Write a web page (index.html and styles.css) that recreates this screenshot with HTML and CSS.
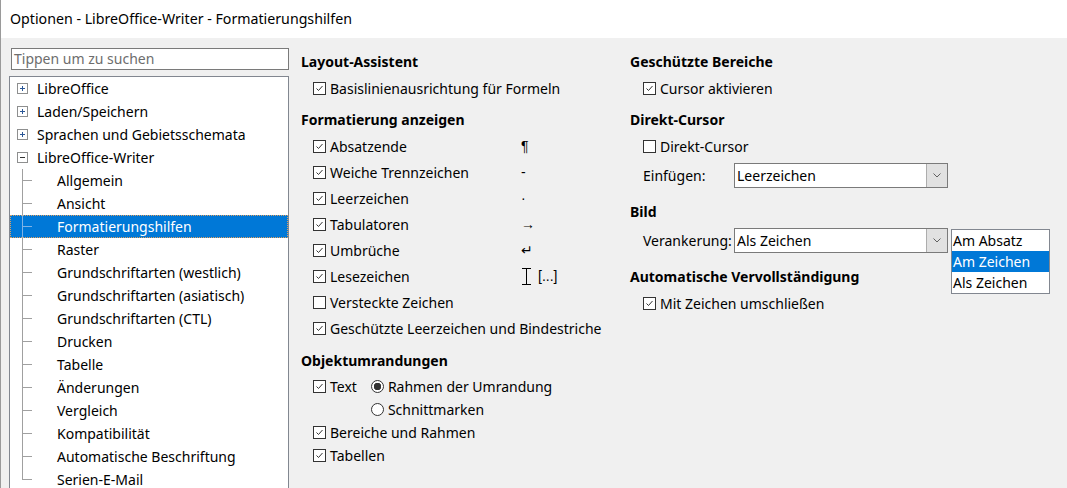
FILE: index.html
```html
<!DOCTYPE html>
<html lang="de">
<head>
    <meta charset="UTF-8">
    <meta name="viewport" content="width=device-width, initial-scale=1.0">
    <title>Optionen - LibreOffice-Writer - Formatierungshilfen</title>
    <link rel="stylesheet" href="styles.css">
</head>
<body>
<div class="window">
    <div class="titlebar">Optionen - LibreOffice-Writer - Formatierungshilfen</div>
    <div class="dialog">
        <!-- Navigation tree -->
        <aside class="sidebar">
            <div class="search">Tippen um zu suchen</div>
            <ul class="tree">
                <li class="node"><svg class="expander" viewBox="0 0 11 11"><rect x="0.5" y="0.5" width="10" height="10" fill="#fff" stroke="#8e8f8f"/><path d="M3 5.5h5M5.5 3v5" stroke="#2b5797"/></svg>LibreOffice</li>
                <li class="node"><svg class="expander" viewBox="0 0 11 11"><rect x="0.5" y="0.5" width="10" height="10" fill="#fff" stroke="#8e8f8f"/><path d="M3 5.5h5M5.5 3v5" stroke="#2b5797"/></svg>Laden/Speichern</li>
                <li class="node"><svg class="expander" viewBox="0 0 11 11"><rect x="0.5" y="0.5" width="10" height="10" fill="#fff" stroke="#8e8f8f"/><path d="M3 5.5h5M5.5 3v5" stroke="#2b5797"/></svg>Sprachen und Gebietsschemata</li>
                <li class="node open"><svg class="expander" viewBox="0 0 11 11"><rect x="0.5" y="0.5" width="10" height="10" fill="#fff" stroke="#8e8f8f"/><path d="M3 5.5h5" stroke="#333"/></svg>LibreOffice-Writer</li>
                <li class="leaf"><span class="twig"></span>Allgemein</li>
                <li class="leaf"><span class="twig"></span>Ansicht</li>
                <li class="leaf selected"><span class="twig"></span>Formatierungshilfen</li>
                <li class="leaf"><span class="twig"></span>Raster</li>
                <li class="leaf"><span class="twig"></span>Grundschriftarten (westlich)</li>
                <li class="leaf"><span class="twig"></span>Grundschriftarten (asiatisch)</li>
                <li class="leaf"><span class="twig"></span>Grundschriftarten (CTL)</li>
                <li class="leaf"><span class="twig"></span>Drucken</li>
                <li class="leaf"><span class="twig"></span>Tabelle</li>
                <li class="leaf"><span class="twig"></span>Änderungen</li>
                <li class="leaf"><span class="twig"></span>Vergleich</li>
                <li class="leaf"><span class="twig"></span>Kompatibilität</li>
                <li class="leaf"><span class="twig"></span>Automatische Beschriftung</li>
                <li class="leaf"><span class="twig"></span>Serien-E-Mail</li>
            </ul>
        </aside>

        <main class="page">
            <div class="column left">
                <section class="group">
                    <h2>Layout-Assistent</h2>
                    <div class="check on">Basislinienausrichtung für Formeln</div>
                </section>

                <section class="group">
                    <h2>Formatierung anzeigen</h2>
                    <div class="marks">
                        <div class="check on">Absatzende</div><span class="sym">¶</span>
                        <div class="check on">Weiche Trennzeichen</div><span class="sym">-</span>
                        <div class="check on">Leerzeichen</div><span class="sym">·</span>
                        <div class="check on">Tabulatoren</div><span class="sym">→</span>
                        <div class="check on">Umbrüche</div><span class="sym">↵</span>
                        <div class="check on">Lesezeichen</div><span class="sym"><svg class="ibeam" viewBox="0 0 11 17"><path d="M1 0.5h9M5.5 0.5v16M1 16.5h9" stroke="#000"/></svg> [...]</span>
                        <div class="check">Versteckte Zeichen</div><span class="sym"></span>
                        <div class="check on wide">Geschützte Leerzeichen und Bindestriche</div>
                    </div>
                </section>

                <section class="group outlines">
                    <h2>Objektumrandungen</h2>
                    <div class="outline">
                        <div class="check on">Text</div>
                        <div class="radios">
                            <div class="radio on">Rahmen der Umrandung</div>
                            <div class="radio">Schnittmarken</div>
                        </div>
                    </div>
                    <div class="check on tight">Bereiche und Rahmen</div>
                    <div class="check on tight">Tabellen</div>
                </section>
            </div>

            <div class="column right">
                <section class="group">
                    <h2>Geschützte Bereiche</h2>
                    <div class="check on">Cursor aktivieren</div>
                </section>

                <section class="group">
                    <h2>Direkt-Cursor</h2>
                    <div class="check">Direkt-Cursor</div>
                    <div class="field">
                        <span class="field-label">Einfügen:</span>
                        <div class="combo"><span class="combo-value">Leerzeichen</span><span class="combo-button"><svg viewBox="0 0 8 5"><path d="M0.5 0.5l3.5 3.5l3.5-3.5" fill="none" stroke="#606060"/></svg></span></div>
                    </div>
                </section>

                <section class="group image">
                    <h2>Bild</h2>
                    <div class="field">
                        <span class="field-label">Verankerung:</span>
                        <div class="combo"><span class="combo-value">Als Zeichen</span><span class="combo-button"><svg viewBox="0 0 8 5"><path d="M0.5 0.5l3.5 3.5l3.5-3.5" fill="none" stroke="#606060"/></svg></span>
                            <ul class="popup">
                                <li>Am Absatz</li>
                                <li class="selected">Am Zeichen</li>
                                <li>Als Zeichen</li>
                            </ul>
                        </div>
                    </div>
                </section>

                <section class="group completion">
                    <h2>Automatische Vervollständigung</h2>
                    <div class="check on">Mit Zeichen umschließen</div>
                </section>
            </div>
        </main>
    </div>
</div>
</body>
</html>
```

FILE: styles.css
```css
body {
    margin: 0;
    padding: 0;
    font-family: "Noto Sans", "Open Sans", sans-serif;
    font-size: 14px;
    color: #000;
    background-color: #f0f0f0;
    overflow: hidden;
}
.window {
    height: 488px;
    border-left: 1px solid #9a9a9a;
    box-sizing: border-box;
}
.titlebar {
    height: 38px;
    line-height: 38px;
    padding-left: 9px;
    background-color: #fff;
    font-size: 14.2px;
}
.dialog {
    display: flex;
    gap: 12px;
}

/* Sidebar */
.sidebar {
    width: 280px;
    padding-left: 8px;
    padding-top: 10px;
    flex-shrink: 0;
}
.search {
    height: 20px;
    line-height: 20px;
    margin-left: 2px;
    padding-left: 2px;
    border: 1px solid #7a7a7a;
    background-color: #fff;
    color: #6d6d6d;
}
.tree {
    list-style: none;
    margin: 6px 0 0 0;
    padding: 0;
    height: 420px;
    border: 1px solid #828790;
    background-color: #fff;
}
.tree li {
    display: flex;
    align-items: center;
    height: 23px;
    white-space: nowrap;
}
.expander {
    width: 11px;
    height: 11px;
    margin: 0 9px 0 7px;
}
.twig {
    align-self: stretch;
    width: 9px;
    margin: 0 25px 0 12px;
    border-left: 1px solid #a0a0a0;
    background: linear-gradient(#a0a0a0, #a0a0a0) no-repeat 0 11px / 9px 1px;
}
.tree li:last-child .twig {
    align-self: flex-start;
    height: 12px;
}
.tree .selected {
    background-color: #0078d7;
    color: #fff;
    outline: 1px dotted #e0a060;
    outline-offset: -1px;
}
.tree .selected .twig {
    border-left-color: #7fb3e6;
    background-image: linear-gradient(#7fb3e6, #7fb3e6);
}

/* Page content */
.page {
    display: flex;
    padding-top: 11px;
}
.column.left {
    width: 329px;
}
.column.right {
    width: 430px;
}
.group {
    margin-bottom: 6px;
}
.group h2 {
    margin: 0;
    font-size: 14px;
    font-weight: 700;
    line-height: 26px;
}
.check,
.radio {
    display: flex;
    align-items: center;
    height: 26px;
    margin-left: 12px;
    white-space: nowrap;
}
.right .check {
    margin-left: 13px;
}
.check::before {
    content: "";
    width: 13px;
    height: 13px;
    margin-right: 4px;
    flex-shrink: 0;
    box-sizing: border-box;
    border: 1px solid #333;
    background-color: #fff;
}
.check.on::before {
    background: #fff url("data:image/svg+xml,%3Csvg xmlns='http://www.w3.org/2000/svg' viewBox='0 0 11 11'%3E%3Cpath d='M2.5 5.5l2 2l4-4.5' fill='none' stroke='%23333'/%3E%3C/svg%3E") no-repeat center / 11px 11px;
}
.marks {
    display: grid;
    grid-template-columns: 220px auto;
}
.marks .wide {
    grid-column: 1 / 3;
}
.sym {
    display: flex;
    align-items: center;
    gap: 6px;
    height: 26px;
    font-family: "Liberation Sans", "DejaVu Sans", sans-serif;
    font-size: 14px;
}
.ibeam {
    width: 11px;
    height: 17px;
}
.outlines {
    margin-top: 7px;
}
.outline {
    display: flex;
    margin-top: 1px;
}
.outline .check {
    height: 23px;
}
.radios {
    margin-left: 14px;
}
.radio {
    height: 23px;
    margin-left: 0;
}
.radio::before {
    content: "";
    width: 13px;
    height: 13px;
    margin-right: 4px;
    border-radius: 50%;
    box-sizing: border-box;
    border: 1px solid #333;
    background-color: #fff;
}
.radio.on::before {
    background: radial-gradient(circle, #333 0, #333 3.5px, #fff 4px);
}
.check.tight {
    height: 23px;
}
.field {
    display: flex;
    align-items: center;
    margin: 4px 0 0 13px;
}
.field-label {
    width: 91px;
}
.combo {
    position: relative;
    display: flex;
    width: 214px;
    height: 25px;
    box-sizing: border-box;
    border: 1px solid #7a7a7a;
    background-color: #fff;
}
.combo-value {
    flex-grow: 1;
    padding-left: 2px;
    line-height: 23px;
}
.combo-button {
    display: flex;
    align-items: center;
    justify-content: center;
    width: 20px;
    border-left: 1px solid #adadad;
    background-color: #e1e1e1;
}
.combo-button svg {
    width: 8px;
    height: 5px;
}
.group.image {
    margin-top: 11px;
}
.group.image h2 {
    margin-bottom: 3px;
}
.group.image .field {
    margin-top: 0;
}
.group.completion {
    margin-top: 11px;
}
.popup {
    position: absolute;
    left: 216px;
    top: 0;
    width: 97px;
    list-style: none;
    margin: 0;
    padding: 0;
    border: 1px solid #828790;
    background-color: #fff;
}
.popup li {
    height: 21px;
    line-height: 21px;
    padding-left: 1px;
    white-space: nowrap;
}
.popup .selected {
    background-color: #0078d7;
    color: #fff;
}
```
